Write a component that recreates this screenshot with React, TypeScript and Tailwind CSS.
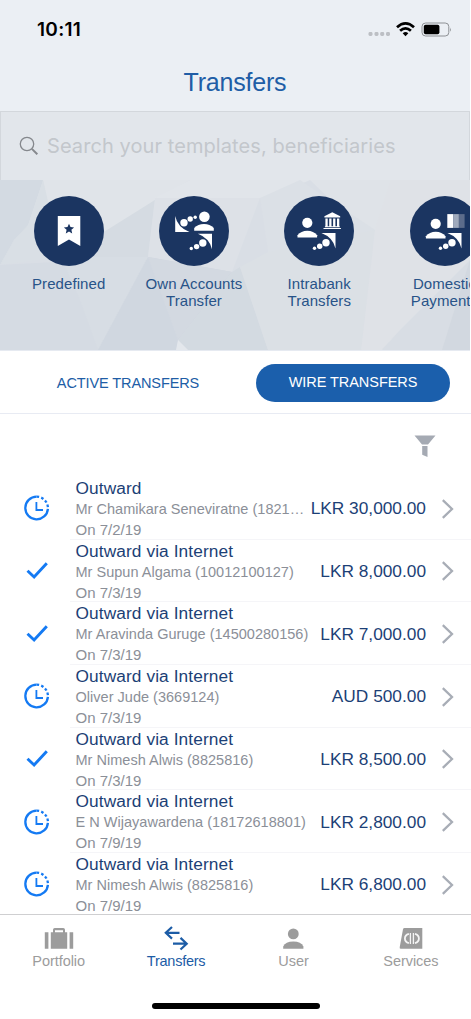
import React from 'react';

type Status = 'pending' | 'done';
interface Transfer {
  title: string;
  name: string;
  date: string;
  amount: string;
  status: Status;
}

const transfers: Transfer[] = [
  { title: 'Outward', name: 'Mr Chamikara Seneviratne (1821…', date: '7/2/19', amount: 'LKR 30,000.00', status: 'pending' },
  { title: 'Outward via Internet', name: 'Mr Supun Algama (10012100127)', date: '7/3/19', amount: 'LKR 8,000.00', status: 'done' },
  { title: 'Outward via Internet', name: 'Mr Aravinda Guruge (14500280156)', date: '7/3/19', amount: 'LKR 7,000.00', status: 'done' },
  { title: 'Outward via Internet', name: 'Oliver Jude (3669124)', date: '7/3/19', amount: 'AUD 500.00', status: 'pending' },
  { title: 'Outward via Internet', name: 'Mr Nimesh Alwis (8825816)', date: '7/3/19', amount: 'LKR 8,500.00', status: 'done' },
  { title: 'Outward via Internet', name: 'E N Wijayawardena (18172618801)', date: '7/9/19', amount: 'LKR 2,800.00', status: 'pending' },
  { title: 'Outward via Internet', name: 'Mr Nimesh Alwis (8825816)', date: '7/9/19', amount: 'LKR 6,800.00', status: 'pending' },
];

const StatusBar = () => <div className="flex h-[58px] items-center justify-between pl-[37px] pr-[18px] pt-[2px]">
    <span className="font-['Inter'] text-[19px] font-semibold tracking-[0.3px] text-black">10:11</span>
    <svg width="86" height="20" viewBox="0 0 86 20">
      <g fill="#bcbfc4">
        <rect x="2.5" y="12" width="4" height="4" rx="1.4" />
        <rect x="8.5" y="12" width="4" height="4" rx="1.4" />
        <rect x="14.2" y="12" width="4" height="4" rx="1.4" />
        <rect x="20" y="12" width="4" height="4" rx="1.4" />
      </g>
      <g fill="none" stroke="#000" strokeWidth="2.7">
        <path d="M31 7.2Q39.5 -0.6 48 7.2" />
        <path d="M34.1 10.8Q39.5 5.8 44.9 10.8" />
      </g>
      <path d="M36.7 13.2Q39.5 11 42.3 13.2L39.5 16.3Z" fill="#000" />
      <rect x="56" y="3" width="26.8" height="13" rx="3.6" fill="none" stroke="#8d9094" />
      <rect x="57.8" y="4.8" width="15.6" height="9.4" rx="1.8" fill="#000" />
      <path d="M84 7.4q1.6 2.1 0 4.3z" fill="#8d9094" />
    </svg>
  </div>;

const Polygons = () => <svg className="absolute inset-0 h-full w-full" viewBox="0 0 470 170" preserveAspectRatio="none">
    <rect width="470" height="170" fill="#d9dee5" />
    <path d="M0 0H470V170H390L372 60 310 0Z" fill="#dfe3e8" />
    <path d="M0 0H43L28 45 14 60 0 85Z" fill="#d3dae2" />
    <path d="M43 0H190L155 20 107 54 61 77 50 35Z" fill="#e0e4e9" />
    <path d="M43 0L61 77 0 85 14 60 28 45Z" fill="#d9dfe5" />
    <path d="M155 20L148 77H61L107 50Z" fill="#d5dbe2" />
    <path d="M155 18H260L232 92 148 77Z" fill="#dde1e7" />
    <path d="M190 0H310L270 18H155Z" fill="#e1e5ea" />
    <path d="M0 85L148 77 98 170H0Z" fill="#d5dbe3" />
    <path d="M61 77H148L98 170 80 120Z" fill="#d7dde4" />
    <path d="M148 77L232 92 178 160 188 170H98Z" fill="#d0d7e0" />
    <path d="M148 77L232 92 178 160Z" fill="#d3d9e1" />
    <path d="M232 92L240 87 268 170H188L178 160Z" fill="#d3dae1" />
    <path d="M260 18L300 0 375 50 367 120 268 72Z" fill="#dbe0e6" />
    <path d="M268 72L375 50 361 170H268L240 87Z" fill="#dbe0e5" />
    <path d="M375 50L391 0H470V80L400 150 382 170H361Z" fill="#dfe2e7" />
    <path d="M470 80L400 150 382 170H470Z" fill="#d8dde4" />
    <path d="M470 80L442 170H470Z" fill="#d2d8e0" />
    <path d="M178 160L188 170H176Z" fill="#e3e7ec" />
  </svg>;

const Person = () => <g>
    <circle cx="23.3" cy="26.8" r="5.1" />
    <path d="M13.5 41.6V39.3Q17 34.8 23.3 34.8T33.1 39.3V41.6Z" />
  </g>;

const TransferArrow = () => <g>
    <path d="M37.4 37.1H51.5V52.5Q49 41.5 37.4 37.1Z" />
    <circle cx="42" cy="46.8" r="3.7" />
    <circle cx="35.7" cy="50.3" r="2.7" />
    <circle cx="30.5" cy="52.2" r="1.7" />
  </g>;

const PredefinedIcon = () => <g>
    <path d="M23.8 20H46.3V50L35 43.4 23.8 50Z" />
    <path d="M35 27.7L36.5 31.1 40.1 31.4 37.4 33.8 38.2 37.4 35 35.5 31.8 37.4 32.6 33.8 29.9 31.4 33.5 31.1Z" fill="#1b3561" />
  </g>;

const OwnAccountsIcon = () => <g>
    <path d="M16.2 20Q18.5 31.5 30.5 36H16.2Z" />
    <circle cx="25" cy="26.7" r="3.7" />
    <circle cx="31.2" cy="23" r="2.7" />
    <circle cx="36.2" cy="21.3" r="1.7" />
    <circle cx="45.4" cy="20.8" r="5.3" />
    <path d="M35.2 34.8V32.1Q39 28 45 28T54.8 32.1V34.8Z" />
    <path d="M38.9 37.8H53V53.2Q50.5 42.2 38.9 37.8Z" />
    <circle cx="43.8" cy="47" r="3.7" />
    <circle cx="37.6" cy="50.6" r="2.7" />
    <circle cx="32.3" cy="52.5" r="1.7" />
  </g>;

const IntrabankIcon = () => <g>
    <Person />
    <path d="M48.3 16.2L56.2 20.3V21.6H40.4V20.3ZM41.4 22.4h2.3v8h-2.3zM45.2 22.4h2.3v8h-2.3zM49.1 22.4h2.3v8h-2.3zM53 22.4h2.3v8H53zM40.9 30.2h14.9v1H40.9zM39.5 31.9h17.4v1.1H39.5z" />
    <TransferArrow />
  </g>;

const DomesticIcon = () => <g>
    <g transform="translate(2.4 1)"><Person /></g>
    <rect x="37.3" y="18.1" width="5.8" height="13.8" />
    <rect x="43.1" y="18.1" width="5.8" height="13.8" fill="#a0aabc" />
    <rect x="48.9" y="18.1" width="5.7" height="13.8" fill="#5c6c8b" />
    <TransferArrow />
  </g>;

interface ShortcutProps {
  lines: string[];
  children: React.ReactNode;
}
const Shortcut: React.FC<ShortcutProps> = ({ lines, children }) => <div className="flex w-[125.3px] shrink-0 flex-col items-center">
    <svg width="70" height="70" viewBox="0 0 70 70" fill="#fff">
      <circle cx="35" cy="35" r="35" fill="#1b3561" />
      {children}
    </svg>
    <div className="mt-[9px] text-center text-[15px] leading-[17.3px] tracking-[0.08px] text-[#285388]">
      {lines.map(l => <div key={l} className="whitespace-nowrap">{l}</div>)}
    </div>
  </div>;

const StatusIcon = ({ status }: { status: Status }) => status === 'done' ? <svg width="26" height="26" viewBox="0 0 26 26" fill="none">
      <path d="M3.5 12.7L10.1 19 22.8 5.2" stroke="#147af3" strokeWidth="2.9" />
    </svg> : <svg width="26" height="26" viewBox="0 0 26 26" fill="none" stroke="#147af3" strokeWidth="2.3">
      <path d="M12.6 1.7A11.3 11.3 0 1 0 23.9 13.8" />
      <path d="M12.6 1.7A11.3 11.3 0 0 1 23.9 13.8" strokeDasharray="2.6 2.1" />
      <path d="M12.4 7V15H19" strokeWidth="1.8" />
    </svg>;

const TransferRow = ({ item }: { item: Transfer }) => <div className="flex h-[62.67px] shrink-0">
    <div className="flex w-[70px] shrink-0 items-center pl-6">
      <StatusIcon status={item.status} />
    </div>
    <div className="flex min-w-0 flex-1 border-b border-[#f5f5f8] pl-[5.5px]">
      <div className="whitespace-nowrap">
        <div className="h-[21px] text-[17.3px] leading-[22px] tracking-[0.1px] text-[#1c3f76]">{item.title}</div>
        <div className="h-[21px] text-[14.5px] leading-[22px] tracking-[0.02px] text-[#8b8f98]">{item.name}</div>
        <div className="h-[20px] text-[15px] leading-[22px] text-[#8b8f98]">On {item.date}</div>
      </div>
      <div className="ml-auto flex items-center pr-[17px] pt-[2px]">
        <span className="whitespace-nowrap text-[17.3px] leading-[21px] text-[#1c3f76]">{item.amount}</span>
        <svg width="12" height="20" viewBox="0 0 12 20" fill="none" className="ml-4">
          <path d="M0.8 1.2L10 10 0.8 18.8" stroke="#a8adb6" strokeWidth="2.3" />
        </svg>
      </div>
    </div>
  </div>;

interface NavItemProps {
  label: string;
  active?: boolean;
  children: React.ReactNode;
}
const NavItem: React.FC<NavItemProps> = ({ label, active, children }) => <button className={active ? 'flex w-[117.4px] flex-col items-center text-[#1c5ca6]' : 'flex w-[117.4px] flex-col items-center text-[#9c9c9c]'}>
    <svg width="30" height="26" viewBox="0 0 30 26" fill="currentColor">{children}</svg>
    <span className={active ? 'text-[14.5px] leading-[18px] tracking-[-0.25px]' : 'text-[14.5px] leading-[18px] tracking-[-0.05px]'}>{label}</span>
  </button>;

export default function App() {
  return <div className="flex h-[1019px] w-[471px] flex-col overflow-hidden bg-white font-['Liberation_Sans',Arial,sans-serif]">
      <header className="h-[111px] w-[470px] bg-[#ebeff4]">
        <StatusBar />
        <h1 className="pt-[8px] text-center text-[25px] leading-[32px] tracking-[-0.2px] text-[#205da6]">Transfers</h1>
      </header>
      <div className="flex h-[69px] w-[470px] items-center border border-b-0 border-[#d3d7dc] bg-[#e2e6eb] pl-[18px]">
        <svg width="20" height="20" viewBox="0 0 20 20" fill="none" stroke="#85888d">
          <circle cx="8" cy="8" r="6.7" strokeWidth="1.3" />
          <path d="M12.9 12.9L18.3 18.2" strokeWidth="2" />
        </svg>
        <span className="ml-[8px] whitespace-nowrap font-['Inter'] text-[20px] tracking-[0.08px] text-[#c3c7cc]">Search your templates, beneficiaries</span>
      </div>
      <section className="relative h-[171px] w-[470px] overflow-hidden border-b border-[#e6eaf1]">
        <Polygons />
        <div className="relative flex pl-[6px] pt-4">
          <Shortcut lines={['Predefined']}><PredefinedIcon /></Shortcut>
          <Shortcut lines={['Own Accounts', 'Transfer']}><OwnAccountsIcon /></Shortcut>
          <Shortcut lines={['Intrabank', 'Transfers']}><IntrabankIcon /></Shortcut>
          <Shortcut lines={['Domestic', 'Payments']}><DomesticIcon /></Shortcut>
        </div>
      </section>
      <div className="flex h-[63px] shrink-0 items-center border-b border-[#e8ebf3] pt-px text-[14.5px]">
        <button className="w-[256px] pt-[2px] tracking-[-0.1px] text-[#205da6]">ACTIVE TRANSFERS</button>
        <button className="h-[38px] w-[194px] rounded-full bg-[#1b5fac] pt-px tracking-[-0.05px] text-white">WIRE TRANSFERS</button>
      </div>
      <div className="flex h-[62.5px] shrink-0 justify-end pr-[35px] pt-[21px]">
        <svg width="22" height="23" viewBox="0 0 22 23" fill="#a5aab3">
          <path d="M0.5 0.5H21.5L14 9.4H8ZM8.2 11H13.5V22L8.2 19.8Z" />
        </svg>
      </div>
      <main className="flex h-[437.5px] shrink-0 flex-col overflow-hidden pt-[0.5px]">
        {transfers.map((t, i) => <TransferRow key={i} item={t} />)}
      </main>
      <nav className="flex h-[105px] shrink-0 flex-col border-t border-[#cfcfd1] bg-white">
        <div className="flex pt-[11px]">
          <NavItem label="Portfolio">
            <path d="M0.8 6.3H4.4V22.8H0.8ZM25.6 6.3H29.2V22.8H25.6ZM6.8 6.3H9V3.7Q9 1.9 10.8 1.9H19.2Q21 1.9 21 3.7V6.3H23.2V22.8H6.8ZM11 6.3H19V4.2H11Z" fillRule="evenodd" />
          </NavItem>
          <NavItem label="Transfers" active>
            <path d="M11 1L4.8 6.8 11 12.6M5.3 6.8H18.5M19.5 11.9L25.7 17.7 19.5 23.5M25.2 17.7H12" fill="none" stroke="currentColor" strokeWidth="2.2" />
          </NavItem>
          <NavItem label="User">
            <circle cx="15.3" cy="7.9" r="5.4" />
            <path d="M5.2 22.8V20.5Q7.5 15.5 15.3 15.5T25.4 20.5V22.8Z" />
          </NavItem>
          <NavItem label="Services">
            <path d="M8.5 2H26.3V22.8H5Q3.3 22.8 3.7 21.3L7 3.2Q7.3 2 8.5 2Z" />
            <g fill="none" stroke="#f4f4f4">
              <path d="M14.4 7V18M17.4 7V18" strokeWidth="1.3" />
              <path d="M12.9 7.9Q8.9 9 8.9 12.5T12.9 17.1M18.9 7.9Q22.9 9 22.9 12.5T18.9 17.1" strokeWidth="1.8" />
            </g>
          </NavItem>
        </div>
        <div className="mb-[10px] ml-[151.5px] mt-auto h-[6px] w-[168px] rounded-full bg-black" />
      </nav>
    </div>;
}
